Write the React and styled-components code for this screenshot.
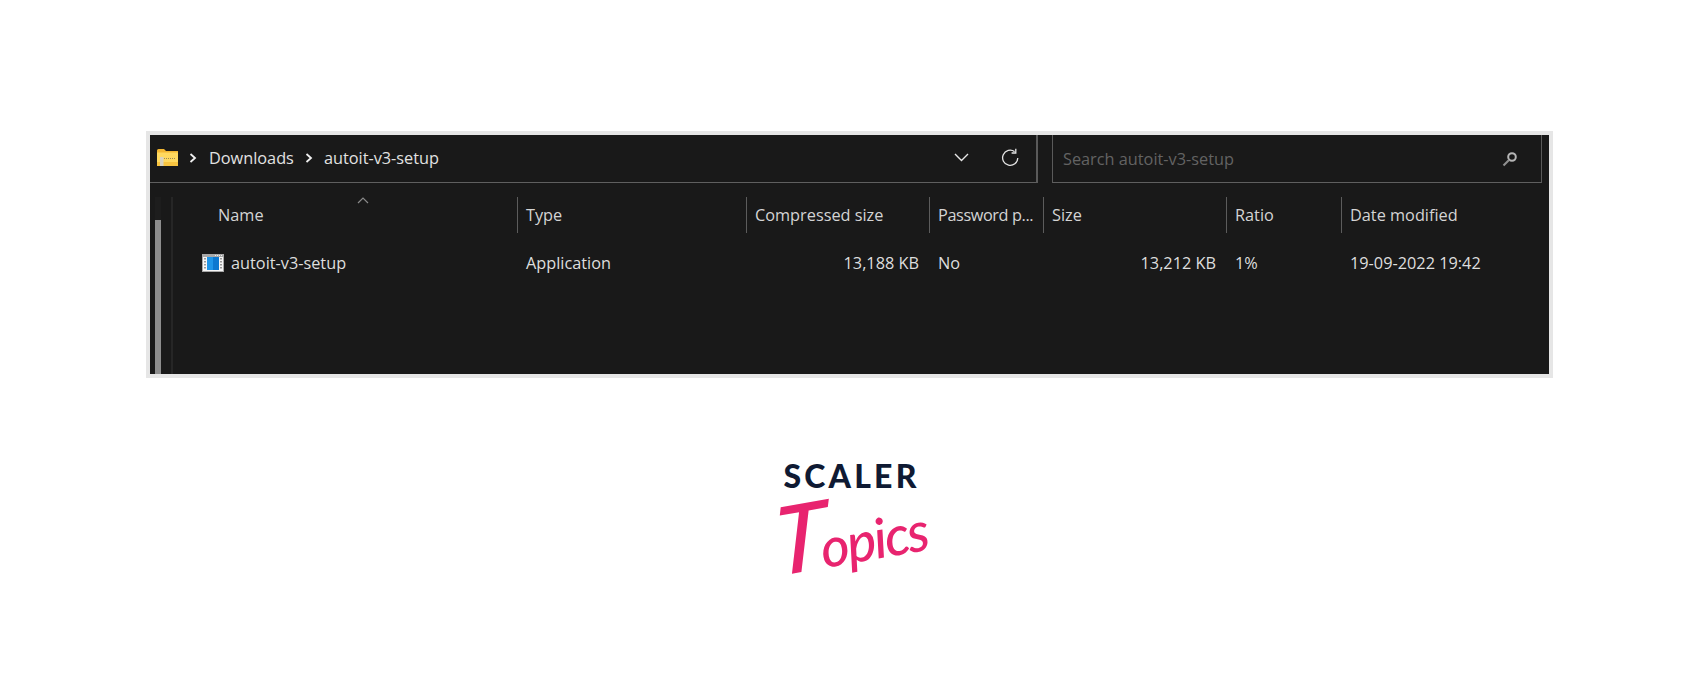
import React from 'react';
import styled, { createGlobalStyle } from 'styled-components';

const GlobalStyle = createGlobalStyle`
  html, body {
    margin: 0;
    padding: 0;
    background: #fff;
  }
`;

const Page = styled.div`
  width: 1700px;
  height: 683px;
  padding: 131px 1px 0 0;
  box-sizing: border-box;
  display: flex;
  flex-direction: column;
  align-items: center;
  overflow: hidden;
  font-family: "Open Sans", "Noto Sans", sans-serif;
`;

const Explorer = styled.div`
  width: 1407px;
  height: 247px;
  flex: none;
  box-sizing: border-box;
  border: 4px solid #e6e6e6;
  background: #191919;
  color: #dcdcdc;
  display: flex;
  flex-direction: column;
`;

const Toolbar = styled.div`
  height: 48px;
  flex: none;
  display: flex;
`;

const AddressBar = styled.div`
  width: 888px;
  box-sizing: border-box;
  border-right: 2px solid #5a5a5a;
  border-bottom: 1px solid #5f5f5f;
  display: flex;
  align-items: center;
  padding: 0 15px 2px 7px;
  font-size: 16.3px;
`;

const Crumb = styled.span`
  margin-left: ${p => p.$gap}px;
  color: #e2e2e2;
`;

const Chevron = styled.svg`
  margin-left: ${p => p.$gap}px;
  flex: none;
`;

const AddressTools = styled.div`
  margin-left: auto;
  display: flex;
  align-items: center;
  gap: 32px;
`;

const SearchBar = styled.div`
  width: 490px;
  margin-left: 14px;
  box-sizing: border-box;
  border-left: 1px solid #5a5a5a;
  border-right: 1px solid #5a5a5a;
  border-bottom: 1px solid #5f5f5f;
  display: flex;
  align-items: center;
  justify-content: space-between;
  padding: 0 23px 0 10px;
  font-size: 16.3px;
  color: #636363;
`;

const Body = styled.div`
  flex: 1;
  display: flex;
  min-height: 0;
`;

const Rail = styled.div`
  width: 23px;
  flex: none;
  padding: 14px 0 0 5px;
  box-sizing: border-box;
  display: flex;
`;

const Track = styled.div`
  width: 7px;
  background: #1d1d1d;
  display: flex;
  flex-direction: column;
  justify-content: flex-end;
`;

const Thumb = styled.div`
  height: 154px;
  background: #8d8d8d;
`;

const PaneLine = styled.div`
  width: 2px;
  margin-left: 10px;
  background: #262626;
`;

const Table = styled.div`
  flex: 1;
  display: grid;
  grid-template-columns: 344px 229px 183px 114px 183px 115px 208px;
  grid-auto-rows: min-content;
  padding-top: 14px;
  font-size: 16.3px;
`;

const HeadCell = styled.div`
  height: 36px;
  box-sizing: border-box;
  position: relative;
  display: flex;
  align-items: center;
  padding-left: ${p => p.$first ? 45 : 8}px;
  border-left: ${p => p.$first ? 0 : '1px solid #5c5c5c'};
  letter-spacing: ${p => p.$tight ? '-0.4px' : 'normal'};
  color: #d4d4d4;
  white-space: nowrap;
`;

const SortCaret = styled.svg`
  position: absolute;
  left: 184px;
  top: 0;
`;

const Cell = styled.div`
  height: 31px;
  margin-top: 14px;
  display: flex;
  align-items: center;
  justify-content: ${p => p.$right ? 'flex-end' : 'flex-start'};
  padding: ${p => p.$right ? '0 10px 0 0' : '0 0 0 9px'};
  color: #dedede;
  white-space: nowrap;
`;

const NameCell = styled(Cell)`
  padding-left: 29px;
  gap: 7px;
`;

const Logo = styled.div`
  margin: 83px 0 0 4px;
  width: 150px;
  display: flex;
  flex-direction: column;
  align-items: center;
`;

const LogoTop = styled.div`
  font-family: "Lato", "Open Sans", sans-serif;
  font-weight: 900;
  font-size: 32px;
  line-height: 30px;
  letter-spacing: 3.2px;
  color: #0f1a33;
`;

const LogoScript = styled.div`
  font-family: "Lato", sans-serif;
  font-style: italic;
  font-weight: 500;
  font-size: 55px;
  line-height: 80px;
  letter-spacing: -2px;
  color: #e8246f;
  white-space: nowrap;
  margin: -4px 0 0 -2px;
  transform: rotate(-10deg);
`;

const LogoCap = styled.span`
  display: inline-block;
  font-size: 94px;
  letter-spacing: -8px;
  transform: skewX(-10deg);
`;

const Arrow = ({ gap }) => (
  <Chevron $gap={gap} width="8" height="10" viewBox="0 0 8 10">
    <path d="M1.5 1 L6 5 L1.5 9" fill="none" stroke="#f0f0f0" strokeWidth="1.8" />
  </Chevron>
);

const ZipFolder = () => (
  <svg width="21" height="17" viewBox="0 0 21 17" style={{ flex: 'none' }}>
    <path d="M0 1.5 Q0 0 1.5 0 H7 L9 2 H21 V4 H0 Z" fill="#f2b632" />
    <rect x="0" y="3.5" width="21" height="13.5" fill="#ffd95f" />
    <rect x="0" y="13" width="21" height="4" fill="#f8c440" />
    <rect x="3" y="8" width="3.5" height="9" fill="#d9d3bf" />
    <line x1="7" y1="9.5" x2="19" y2="9.5" stroke="#9c8a52" strokeDasharray="1 1" />
  </svg>
);

const AppIcon = () => (
  <svg width="22" height="18" viewBox="0 0 22 18" style={{ flex: 'none' }}>
    <rect x="0" y="0" width="22" height="18" fill="#a8a8a8" />
    <rect x="1" y="3" width="20" height="14" fill="#f6f6f6" />
    <rect x="5" y="3" width="12" height="13" fill="#0d78d0" />
    <rect x="5" y="3" width="6" height="13" fill="#1f95e8" />
    <line x1="3" y1="4" x2="3" y2="16" stroke="#9a9a9a" strokeWidth="2" strokeDasharray="1.5 1.5" />
    <line x1="19" y1="4" x2="19" y2="16" stroke="#9a9a9a" strokeWidth="2" strokeDasharray="1.5 1.5" />
    <line x1="13" y1="1.5" x2="21" y2="1.5" stroke="#eee" strokeDasharray="1 1" />
  </svg>
);

const App = () => {
  const columns = ['Type', 'Compressed size', 'Password p...', 'Size', 'Ratio', 'Date modified'];

  return (
    <Page>
      <GlobalStyle />
      <Explorer>
        <Toolbar>
          <AddressBar>
            <ZipFolder />
            <Arrow gap={11} />
            <Crumb $gap={12}>Downloads</Crumb>
            <Arrow gap={11} />
            <Crumb $gap={11}>autoit-v3-setup</Crumb>
            <AddressTools>
              <svg width="15" height="9" viewBox="0 0 15 9">
                <path d="M1 1 L7.5 7.5 L14 1" fill="none" stroke="#e8e8e8" strokeWidth="1.4" />
              </svg>
              <svg width="20" height="20" viewBox="0 0 20 20">
                <path d="M16.8 10 A7.6 7.6 0 1 1 13.6 3.6" fill="none" stroke="#e4e4e4" strokeWidth="1.3" />
                <path d="M14.8 0.8 V5 H10.6" fill="none" stroke="#e4e4e4" strokeWidth="1.3" />
              </svg>
            </AddressTools>
          </AddressBar>
          <SearchBar>
            <span>Search autoit-v3-setup</span>
            <svg width="16" height="16" viewBox="0 0 16 16">
              <circle cx="10" cy="6" r="3.8" fill="none" stroke="#b5b5b5" strokeWidth="2" />
              <path d="M7 9 L1.5 14.5" stroke="#8f8f8f" strokeWidth="2.2" />
            </svg>
          </SearchBar>
        </Toolbar>
        <Body>
          <Rail>
            <Track>
              <Thumb />
            </Track>
            <PaneLine />
          </Rail>
          <Table>
            <HeadCell $first>
              Name
              <SortCaret width="12" height="7" viewBox="0 0 12 7">
                <path d="M1 6 L6 1 L11 6" fill="none" stroke="#8a8a8a" strokeWidth="1.2" />
              </SortCaret>
            </HeadCell>
            {columns.map(c => <HeadCell key={c} $tight={c.endsWith('...')}>{c}</HeadCell>)}
            <NameCell><AppIcon />autoit-v3-setup</NameCell>
            <Cell>Application</Cell>
            <Cell $right>13,188 KB</Cell>
            <Cell>No</Cell>
            <Cell $right>13,212 KB</Cell>
            <Cell>1%</Cell>
            <Cell>19-09-2022 19:42</Cell>
          </Table>
        </Body>
      </Explorer>
      <Logo>
        <LogoTop>SCALER</LogoTop>
        <LogoScript><LogoCap>T</LogoCap>opics</LogoScript>
      </Logo>
    </Page>
  );
};

export default App;
